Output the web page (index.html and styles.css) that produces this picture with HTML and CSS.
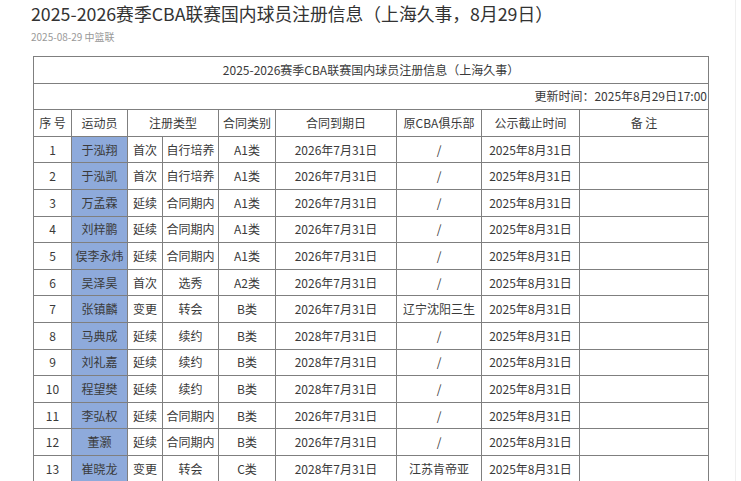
FILE: index.html
```html
<!DOCTYPE html>
<html lang="zh">
<head>
<meta charset="utf-8">
<link rel="stylesheet" href="styles.css">
</head>
<body>
<div class="page">
  <h1 class="title">2025-2026赛季CBA联赛国内球员注册信息（上海久事，8月29日）</h1>
  <div class="meta">2025-08-29 中篮联</div>
  <table class="reg">
    <colgroup>
      <col class="c1"><col class="c2"><col class="c3"><col class="c4"><col class="c5"><col class="c6"><col class="c7"><col class="c8"><col class="c9">
    </colgroup>
    <tr><td colspan="9" class="cap">2025-2026赛季CBA联赛国内球员注册信息（上海久事）</td></tr>
    <tr><td colspan="9" class="upd">更新时间：2025年8月29日17:00</td></tr>
    <tr><td>序 号</td><td>运动员</td><td colspan="2">注册类型</td><td>合同类别</td><td>合同到期日</td><td>原CBA俱乐部</td><td>公示截止时间</td><td>备 注</td></tr>
    <tr><td>1</td><td class="nm">于泓翔</td><td>首次</td><td>自行培养</td><td>A1类</td><td>2026年7月31日</td><td>/</td><td>2025年8月31日</td><td></td></tr>
    <tr><td>2</td><td class="nm">于泓凯</td><td>首次</td><td>自行培养</td><td>A1类</td><td>2026年7月31日</td><td>/</td><td>2025年8月31日</td><td></td></tr>
    <tr><td>3</td><td class="nm">万孟霖</td><td>延续</td><td>合同期内</td><td>A1类</td><td>2026年7月31日</td><td>/</td><td>2025年8月31日</td><td></td></tr>
    <tr><td>4</td><td class="nm">刘梓鹏</td><td>延续</td><td>合同期内</td><td>A1类</td><td>2026年7月31日</td><td>/</td><td>2025年8月31日</td><td></td></tr>
    <tr><td>5</td><td class="nm">俣李永炜</td><td>延续</td><td>合同期内</td><td>A1类</td><td>2026年7月31日</td><td>/</td><td>2025年8月31日</td><td></td></tr>
    <tr><td>6</td><td class="nm">吴泽昊</td><td>首次</td><td>选秀</td><td>A2类</td><td>2026年7月31日</td><td>/</td><td>2025年8月31日</td><td></td></tr>
    <tr><td>7</td><td class="nm">张镇麟</td><td>变更</td><td>转会</td><td>B类</td><td>2026年7月31日</td><td>辽宁沈阳三生</td><td>2025年8月31日</td><td></td></tr>
    <tr><td>8</td><td class="nm">马典成</td><td>延续</td><td>续约</td><td>B类</td><td>2028年7月31日</td><td>/</td><td>2025年8月31日</td><td></td></tr>
    <tr><td>9</td><td class="nm">刘礼嘉</td><td>延续</td><td>续约</td><td>B类</td><td>2028年7月31日</td><td>/</td><td>2025年8月31日</td><td></td></tr>
    <tr><td>10</td><td class="nm">程望樊</td><td>延续</td><td>续约</td><td>B类</td><td>2028年7月31日</td><td>/</td><td>2025年8月31日</td><td></td></tr>
    <tr><td>11</td><td class="nm">李弘权</td><td>延续</td><td>合同期内</td><td>B类</td><td>2026年7月31日</td><td>/</td><td>2025年8月31日</td><td></td></tr>
    <tr><td>12</td><td class="nm">董灏</td><td>延续</td><td>合同期内</td><td>B类</td><td>2026年7月31日</td><td>/</td><td>2025年8月31日</td><td></td></tr>
    <tr><td>13</td><td class="nm">崔晓龙</td><td>变更</td><td>转会</td><td>C类</td><td>2028年7月31日</td><td>江苏肯帝亚</td><td>2025年8月31日</td><td></td></tr>
  </table>
</div>
</body>
</html>
```

FILE: styles.css
```css
html, body {
  margin: 0;
  padding: 0;
  background: #fff;
  overflow: hidden;
}
body {
  font-family: "Noto Sans CJK SC", "Noto Sans", sans-serif;
  color: #333;
}
.page {
  width: 736px;
  height: 481px;
  box-sizing: border-box;
  border-right: 1px solid #efefef;
  padding: 0 0 0 31px;
}
.title {
  margin: 0;
  padding-top: 1px;
  font-size: 17.8px;
  font-weight: normal;
  line-height: 24px;
  color: #333;
}
.meta {
  margin-top: 5px;
  font-size: 10px;
  line-height: 14px;
  color: #999;
}
.reg {
  margin-top: 12px;
  margin-left: 2px;
  width: 675px;
  table-layout: fixed;
  border-collapse: collapse;
  font-size: 12px;
  color: #3a3a3a;
}
.reg td {
  border: 1px solid #7f7f7f;
  height: 25.6px;
  padding: 0;
  text-align: center;
  vertical-align: middle;
  line-height: 16px;
  white-space: nowrap;
}
.reg td.upd {
  text-align: right;
  padding-right: 1px;
}
.reg td.nm {
  background: #8eaadb;
}
.c1 { width: 38px; }
.c2 { width: 56px; }
.c3 { width: 35px; }
.c4 { width: 56px; }
.c5 { width: 57px; }
.c6 { width: 121px; }
.c7 { width: 85px; }
.c8 { width: 98px; }
.c9 { width: 129px; }
```
